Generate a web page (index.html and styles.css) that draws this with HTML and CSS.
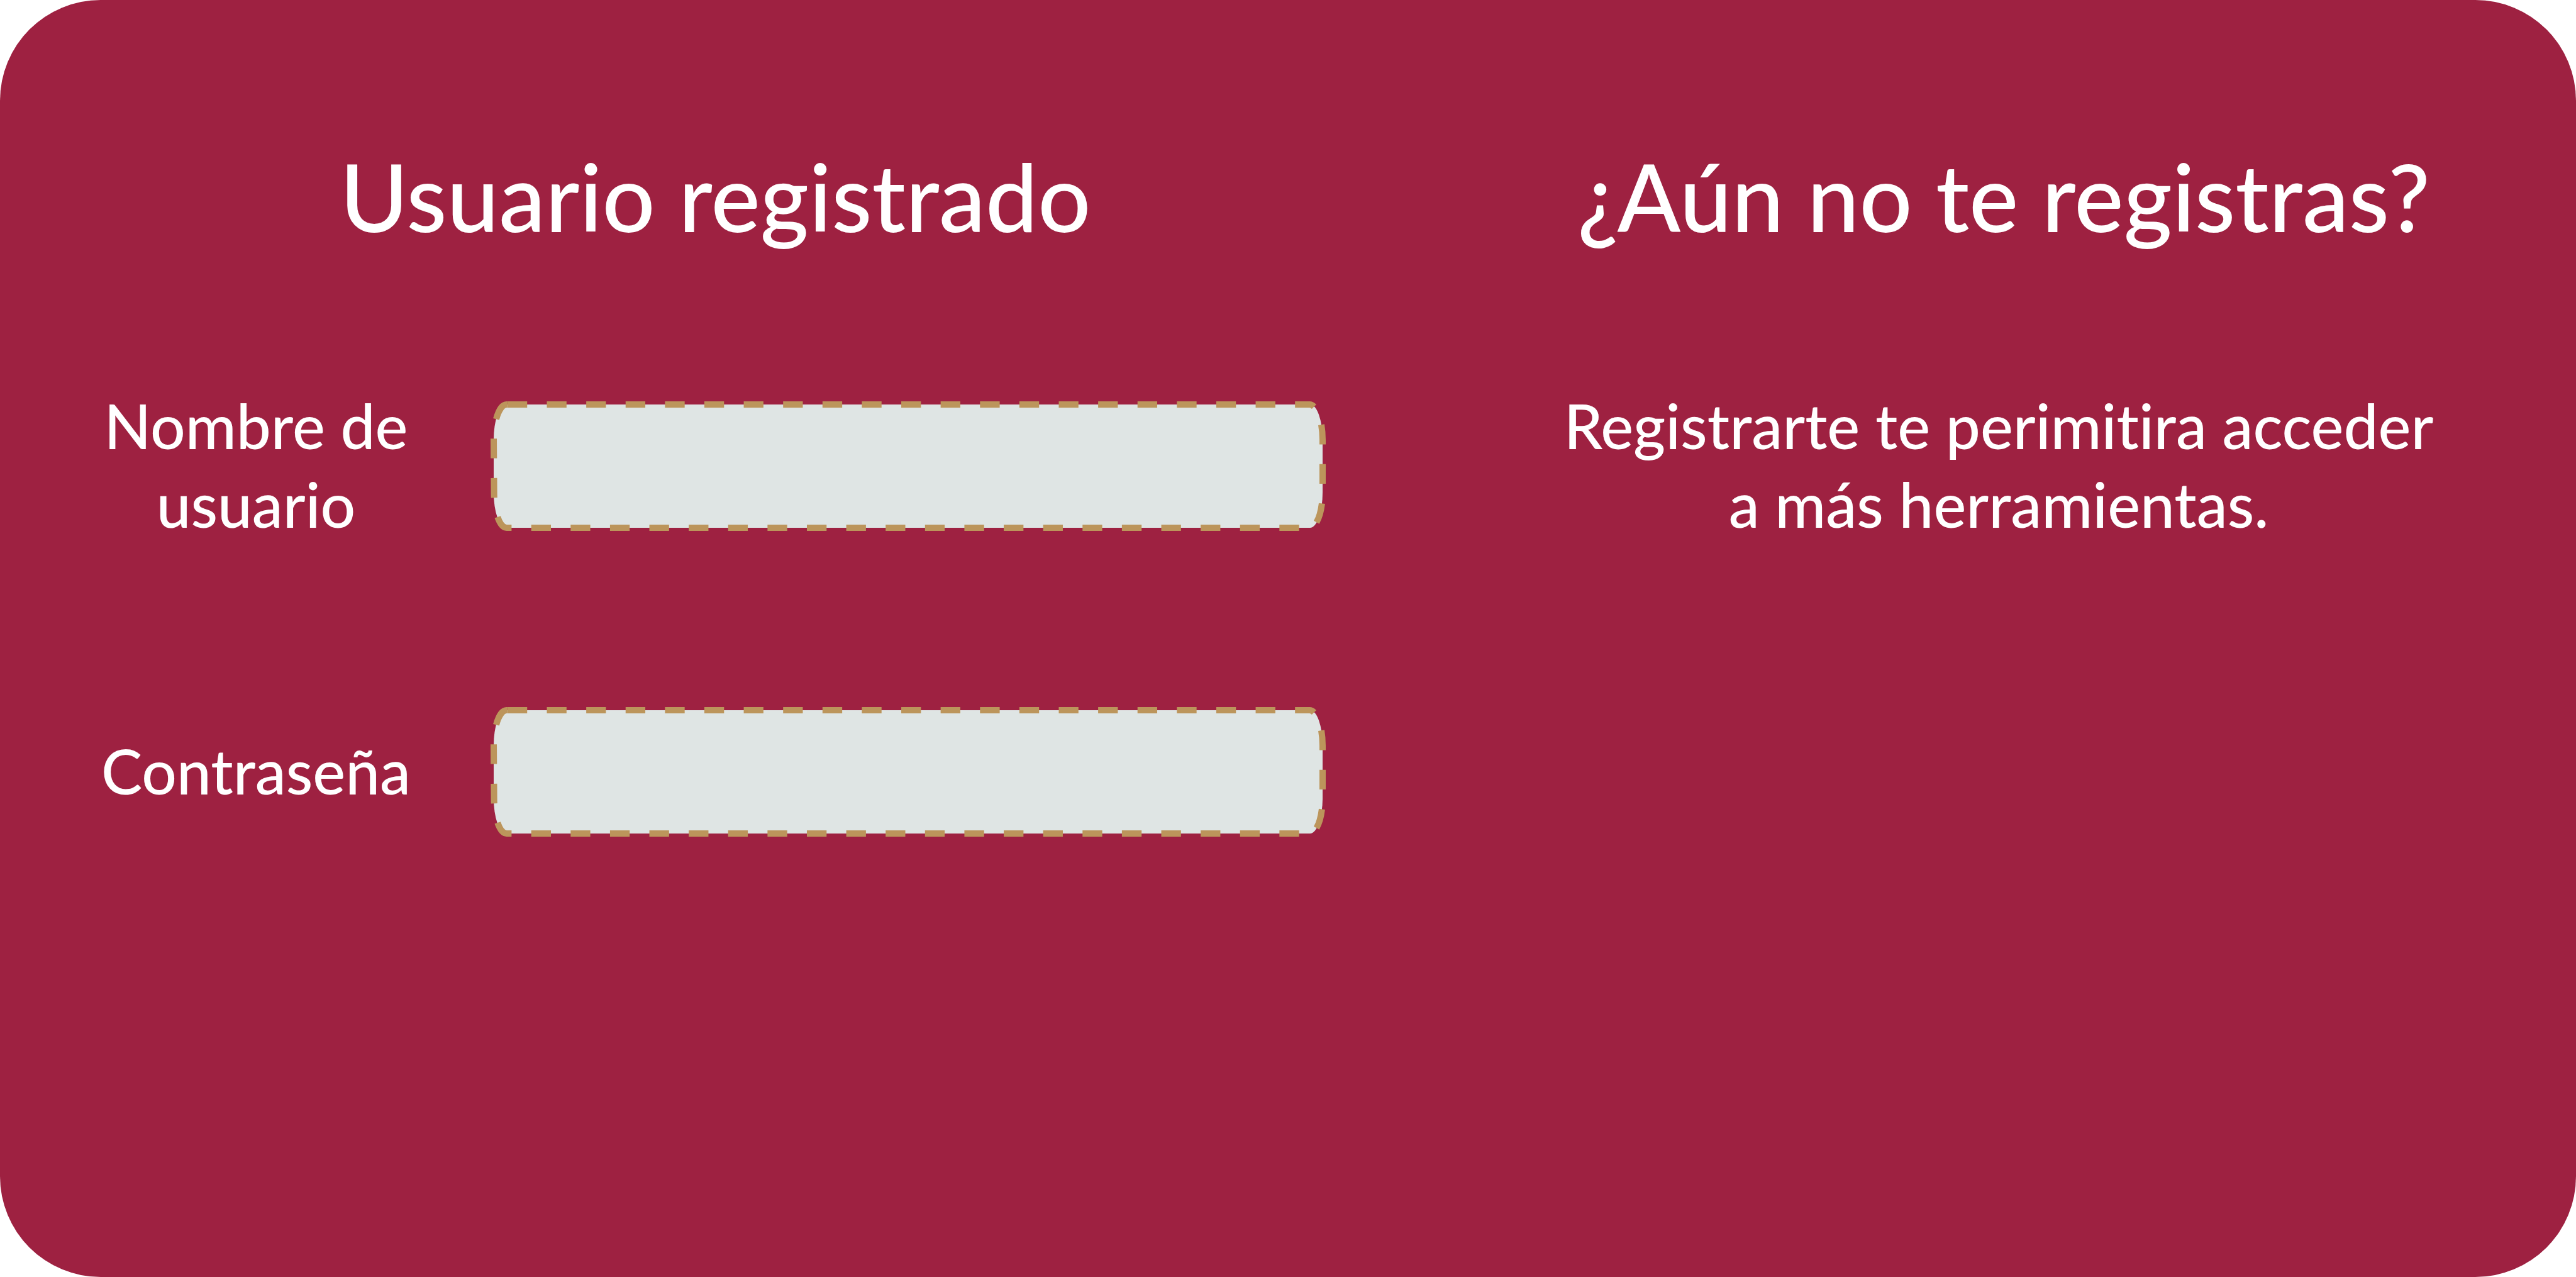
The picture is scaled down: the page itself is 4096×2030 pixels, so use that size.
FILE: index.html
```html
<!DOCTYPE html>
<html lang="es">
<head>
<meta charset="utf-8">
<meta name="viewport" content="width=device-width, initial-scale=1">
<title>Usuario registrado</title>
<link rel="stylesheet" href="styles.css">
</head>
<body>
<main class="card">
  <form class="login">
    <h1 class="title">Usuario registrado</h1>
    <div class="row">
      <label class="label" for="usuario">Nombre de usuario</label>
      <div class="field">
        <input class="input" id="usuario" name="usuario" type="text" autocomplete="username">
        <svg class="outline" viewBox="0 0 2105 313" preserveAspectRatio="none" aria-hidden="true">
          <path d="M35 0H2072C2090 0 2105 40 2105 90V223C2105 273 2090 313 2072 313H33C15 313 1 273 1 223L0 90C0 40 15 0 33 0Z"/>
        </svg>
      </div>
    </div>
    <div class="row">
      <label class="label" for="contrasena">Contraseña</label>
      <div class="field">
        <input class="input" id="contrasena" name="contrasena" type="password" autocomplete="current-password">
        <svg class="outline" viewBox="0 0 2105 313" preserveAspectRatio="none" aria-hidden="true">
          <path d="M35 0H2072C2090 0 2105 40 2105 90V223C2105 273 2090 313 2072 313H33C15 313 1 273 1 223L0 90C0 40 15 0 33 0Z"/>
        </svg>
      </div>
    </div>
  </form>
  <section class="signup">
    <h2 class="title">¿Aún no te registras?</h2>
    <p class="text">Registrarte te perimitira acceder a más herramientas.</p>
  </section>
</main>
</body>
</html>
```
FILE: styles.css
```css
* {
  box-sizing: border-box;
}

body {
  margin: 0;
  background: #fff;
  color: #fff;
  font-family: Lato, "Noto Sans", sans-serif;
  font-size: 98px;
  font-weight: 500;
  line-height: 125px;
  font-variant-ligatures: none;
}

.card {
  display: grid;
  grid-template-columns: 1943fr 1500fr;
  column-gap: 333px;
  min-height: 100vh;
  padding: 224px 160px;
  border-radius: 160px;
  background: #9e2141;
}

.title {
  margin: 0 0 214px;
  font-size: 148px;
  font-weight: 500;
  line-height: 176px;
  text-align: center;
}

.login .title {
  padding-left: 12px;
}

.row {
  display: grid;
  grid-template-columns: 494px 1fr;
  column-gap: 131px;
  align-items: center;
}

.row + .row {
  margin-top: 261px;
}

.label {
  padding-bottom: 4px;
  text-align: center;
}

.field {
  position: relative;
}

.input {
  display: block;
  width: 100%;
  height: 196px;
  padding: 0 48px;
  border: 0;
  border-radius: 20px / 56px;
  outline: 0;
  background: #dfe5e4;
  color: #9e2141;
  font: inherit;
}

.outline {
  position: absolute;
  inset: 0;
  width: 100%;
  height: 100%;
  overflow: visible;
  pointer-events: none;
}

.outline path {
  fill: none;
  stroke: #bc955b;
  stroke-width: 16;
  stroke-dasharray: 50 50;
}

.text {
  margin: 0;
  padding: 0 56px 0 40px;
  text-align: center;
}
```
